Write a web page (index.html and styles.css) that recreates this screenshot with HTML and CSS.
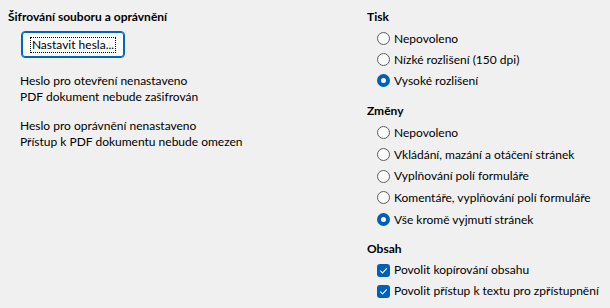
FILE: index.html
```html
<!DOCTYPE html>
<html lang="cs">
<head>
<meta charset="utf-8">
<link rel="stylesheet" href="styles.css">
</head>
<body>
<div class="dialog">
  <section class="col left">
    <h2 class="head">Šifrování souboru a oprávnění</h2>
    <button class="btn"><span class="focus">Nastavit hesla...</span></button>
    <p class="info">Heslo pro otevření nenastaveno<br>PDF dokument nebude zašifrován</p>
    <p class="info second">Heslo pro oprávnění nenastaveno<br>Přístup k PDF dokumentu nebude omezen</p>
  </section>
  <section class="col right">
    <h2 class="head">Tisk</h2>
    <ul class="opts tisk">
      <li class="opt"><span class="radio"></span>Nepovoleno</li>
      <li class="opt"><span class="radio"></span>Nízké rozlišení (150 dpi)</li>
      <li class="opt"><span class="radio on"></span>Vysoké rozlišení</li>
    </ul>
    <h2 class="head group">Změny</h2>
    <ul class="opts zmeny">
      <li class="opt"><span class="radio"></span>Nepovoleno</li>
      <li class="opt"><span class="radio"></span>Vkládání, mazání a otáčení stránek</li>
      <li class="opt"><span class="radio"></span>Vyplňování polí formuláře</li>
      <li class="opt"><span class="radio"></span>Komentáře, vyplňování polí formuláře</li>
      <li class="opt"><span class="radio on"></span>Vše kromě vyjmutí stránek</li>
    </ul>
    <h2 class="head group obsah-head">Obsah</h2>
    <ul class="opts obsah">
      <li class="opt"><span class="check"><svg viewBox="0 0 13 13" width="13" height="13"><path d="M3.3 6.7 L5.5 8.9 L9.8 4.4" fill="none" stroke="#fff" stroke-width="1.1"/></svg></span>Povolit kopírování obsahu</li>
      <li class="opt"><span class="check"><svg viewBox="0 0 13 13" width="13" height="13"><path d="M3.3 6.7 L5.5 8.9 L9.8 4.4" fill="none" stroke="#fff" stroke-width="1.1"/></svg></span>Povolit přístup k textu pro zpřístupnění</li>
    </ul>
  </section>
</div>
</body>
</html>
```
FILE: styles.css
```css
html, body {
  margin: 0;
  padding: 0;
  background: #f0f0f0;
}
body {
  font-family: "Lato", "Noto Sans", sans-serif;
  font-size: 12px;
  color: #000;
}
.dialog {
  display: flex;
  padding: 9px 8px 0 8px;
  width: 610px;
  height: 308px;
  box-sizing: border-box;
}
.col.left {
  width: 359px;
}
.col.right {
  flex: 1;
}
.head {
  margin: 0;
  font-size: 12px;
  font-weight: 700;
  line-height: 16px;
  height: 16px;
}
.btn {
  display: flex;
  align-items: center;
  justify-content: center;
  margin: 6px 0 0 13px;
  width: 104px;
  height: 27px;
  background: #fdfdfd;
  border: 1px solid #0067c0;
  border-radius: 4px;
  box-shadow: inset 0 0 0 1px #0067c0;
  padding: 0;
  font: inherit;
  font-size: 12px;
  color: #000;
}
.focus {
  border: 1px dotted #000;
  padding: 0 1px;
  line-height: 14px;
  white-space: nowrap;
}
.info {
  margin: 15px 0 0 12px;
  line-height: 16px;
}
.info.second {
  margin-top: 13px;
}
.opts {
  list-style: none;
  margin: 3px 0 0 10px;
  padding: 0;
}
.opt {
  display: flex;
  align-items: center;
  height: 21px;
  line-height: 16px;
  white-space: nowrap;
}
.zmeny .opt {
  height: 21.7px;
}
.head.group {
  margin-top: 12px;
}
.head.obsah-head {
  margin-top: 10.5px;
}
.radio {
  width: 13px;
  height: 13px;
  box-sizing: border-box;
  border: 1px solid #5d5d5d;
  border-radius: 50%;
  background: #fbfbfb;
  margin-right: 4px;
  flex: none;
}
.radio.on {
  border: 4px solid #005fb8;
  background: #fff;
}
.check {
  width: 13px;
  height: 13px;
  border-radius: 3px;
  background: #005fb8;
  margin-right: 4px;
  flex: none;
  display: block;
}
.check svg {
  display: block;
}
```
